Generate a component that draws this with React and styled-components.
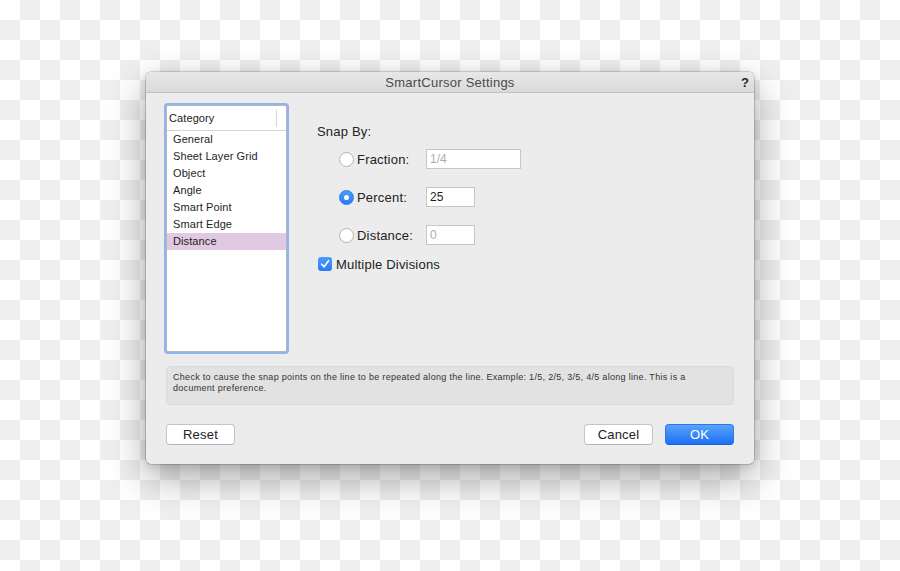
import React from 'react';
import styled, { createGlobalStyle } from 'styled-components';

const Global = createGlobalStyle`
  html, body { margin: 0; padding: 0; }
  body {
    min-height: 571px;
    background-color: #ffffff;
    background-image: repeating-conic-gradient(#efefef 0% 25%, #ffffff 0% 50%);
    background-size: 40px 40px;
    font-family: "Liberation Sans", Arial, sans-serif;
    -webkit-font-smoothing: antialiased;
  }
`;

const Stage = styled.div`
  box-sizing: border-box;
  height: 571px;
  padding: 72px 0 0 146px;
`;

const Dialog = styled.div`
  box-sizing: border-box;
  width: 608px;
  height: 392px;
  background: #ececec;
  border-radius: 5px;
  overflow: hidden;
  display: flex;
  flex-direction: column;
  box-shadow: 0 0 0 0.5px rgba(0, 0, 0, 0.28), 0 14px 38px rgba(0, 0, 0, 0.34),
    0 2px 8px rgba(0, 0, 0, 0.12);
`;

const TitleBar = styled.div`
  box-sizing: border-box;
  height: 21px;
  display: grid;
  grid-template-columns: 1fr auto 1fr;
  align-items: center;
  background: linear-gradient(#e8e8e8, #dadada);
  border-bottom: 1px solid #c3c3c3;
`;

const Title = styled.div`
  grid-column: 2;
  font-size: 13px;
  letter-spacing: 0.25px;
  color: #4a4a4a;
`;

const Help = styled.div`
  justify-self: end;
  padding-right: 5px;
  font-size: 13px;
  font-weight: bold;
  color: #262626;
`;

const Body = styled.div`
  display: flex;
  flex-direction: column;
  padding: 12px 20px 19px 20px;
`;

const Top = styled.div`
  display: flex;
  height: 247px;
`;

const ListBox = styled.div`
  box-sizing: border-box;
  width: 121px;
  height: 247px;
  background: #fff;
  border: 1px solid #b7b7b7;
  border-radius: 2px;
  box-shadow: 0 0 0 2px #90b4ed;
`;

const ListHeader = styled.div`
  box-sizing: border-box;
  height: 25px;
  display: flex;
  align-items: center;
  justify-content: space-between;
  padding: 0 9px 0 2px;
  border-bottom: 1px solid #d4d4d4;
  font-size: 11px;
  letter-spacing: 0.1px;
  color: #222;
`;

const HeaderDivider = styled.span`
  width: 1px;
  height: 17px;
  background: #d6d6d6;
`;

const ListItem = styled.div`
  height: 17px;
  line-height: 17px;
  padding-left: 6px;
  font-size: 11px;
  letter-spacing: 0.1px;
  color: #1e1e1e;
  background: ${(p) => (p.$selected ? '#e1c9e1' : 'transparent')};
`;

const Panel = styled.div`
  display: flex;
  flex-direction: column;
  margin-left: 30px;
  padding-top: 19px;
`;

const Heading = styled.div`
  font-size: 13px;
  line-height: 16px;
  letter-spacing: 0.2px;
  color: #222;
`;

const RadioGroup = styled.div`
  display: flex;
  flex-direction: column;
  gap: 18px;
  margin: 9px 0 0 22px;
`;

const Row = styled.label`
  display: flex;
  align-items: center;
  height: 20px;
`;

const Radio = styled.span`
  box-sizing: border-box;
  width: 15px;
  height: 15px;
  border-radius: 50%;
  display: flex;
  align-items: center;
  justify-content: center;
  background: ${(p) => (p.$on ? 'linear-gradient(#4f9cf9, #2a7bf5)' : '#fff')};
  border: 1px solid ${(p) => (p.$on ? '#2d7cf0' : '#b3b3b3')};
  &::after {
    content: '';
    display: ${(p) => (p.$on ? 'block' : 'none')};
    width: 5px;
    height: 5px;
    border-radius: 50%;
    background: #fff;
  }
`;

const RadioLabel = styled.span`
  width: 69px;
  margin-left: 3px;
  font-size: 13px;
  letter-spacing: 0.2px;
  color: #222;
`;

const Field = styled.div`
  box-sizing: border-box;
  width: ${(p) => p.$w}px;
  height: 20px;
  background: #fff;
  border: 1px solid #c6c6c6;
  padding-left: 3px;
  font-size: 12px;
  line-height: 18px;
  color: ${(p) => (p.$disabled ? '#acacac' : '#1e1e1e')};
`;

const CheckRow = styled.label`
  display: flex;
  align-items: center;
  height: 16px;
  margin: 11px 0 0 1px;
`;

const CheckBox = styled.span`
  box-sizing: border-box;
  width: 14px;
  height: 14px;
  border-radius: 3px;
  background: linear-gradient(#4f9cf9, #2a7bf5);
  display: flex;
  align-items: center;
  justify-content: center;
`;

const CheckLabel = styled.span`
  margin-left: 4px;
  font-size: 13px;
  letter-spacing: 0.2px;
  color: #222;
`;

const HelpBox = styled.div`
  box-sizing: border-box;
  height: 39px;
  margin-top: 14px;
  padding: 5px 30px 0 6px;
  background: #e2e2e2;
  border: 1px solid #dadada;
  border-radius: 4px;
  font-size: 9px;
  line-height: 11px;
  letter-spacing: 0.3px;
  color: #333;
`;

const Buttons = styled.div`
  display: flex;
  gap: 12px;
  margin-top: 19px;
`;

const Spacer = styled.div`
  flex: 1;
`;

const Button = styled.button`
  box-sizing: border-box;
  width: 69px;
  height: 21px;
  padding: 0;
  border-radius: 4px;
  font-family: inherit;
  font-size: 13px;
  letter-spacing: 0.2px;
  color: ${(p) => (p.$primary ? '#fff' : '#222')};
  background: ${(p) => (p.$primary ? 'linear-gradient(#5aa2f9, #1d70f5)' : '#fff')};
  border: 1px solid ${(p) => (p.$primary ? '#2a78f0' : '#c4c4c4')};
  border-bottom-color: ${(p) => (p.$primary ? '#1a63de' : '#b3b3b3')};
`;

const categories = [
  'General',
  'Sheet Layer Grid',
  'Object',
  'Angle',
  'Smart Point',
  'Smart Edge',
  'Distance',
];

const radios = [
  { label: 'Fraction:', value: '1/4', width: 95, on: false },
  { label: 'Percent:', value: '25', width: 49, on: true },
  { label: 'Distance:', value: '0', width: 49, on: false },
];

export default function App() {
  return (
    <>
      <Global />
      <Stage>
        <Dialog>
          <TitleBar>
            <Title>SmartCursor Settings</Title>
            <Help>?</Help>
          </TitleBar>
          <Body>
            <Top>
              <ListBox>
                <ListHeader>
                  <span>Category</span>
                  <HeaderDivider />
                </ListHeader>
                {categories.map((c) => (
                  <ListItem key={c} $selected={c === 'Distance'}>
                    {c}
                  </ListItem>
                ))}
              </ListBox>
              <Panel>
                <Heading>Snap By:</Heading>
                <RadioGroup>
                  {radios.map((r) => (
                    <Row key={r.label}>
                      <Radio $on={r.on} />
                      <RadioLabel>{r.label}</RadioLabel>
                      <Field $w={r.width} $disabled={!r.on}>
                        {r.value}
                      </Field>
                    </Row>
                  ))}
                </RadioGroup>
                <CheckRow>
                  <CheckBox>
                    <svg width="10" height="10" viewBox="0 0 10 10">
                      <path
                        d="M1.6 5.2 L4 7.8 L8.6 1.8"
                        fill="none"
                        stroke="#fff"
                        strokeWidth="1.6"
                        strokeLinecap="round"
                        strokeLinejoin="round"
                      />
                    </svg>
                  </CheckBox>
                  <CheckLabel>Multiple Divisions</CheckLabel>
                </CheckRow>
              </Panel>
            </Top>
            <HelpBox>
              Check to cause the snap points on the line to be repeated along the line. Example: 1/5, 2/5, 3/5, 4/5 along line. This is a document preference.
            </HelpBox>
            <Buttons>
              <Button>Reset</Button>
              <Spacer />
              <Button>Cancel</Button>
              <Button $primary>OK</Button>
            </Buttons>
          </Body>
        </Dialog>
      </Stage>
    </>
  );
}
